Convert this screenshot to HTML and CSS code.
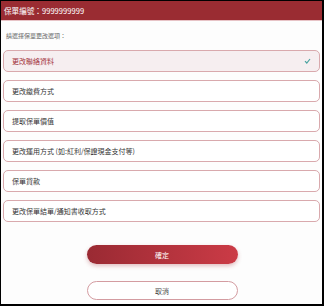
FILE: index.html
```html
<!DOCTYPE html>
<html>
  <head>
    <meta charset="UTF-8">
    <title>保單更改</title>
    <link rel="stylesheet" href="styles.css">
  </head>
  <body>
    <div class="header">保單編號：9999999999</div>
    <p class="hint">請選擇保單更改選項：</p>
    <ul class="options">
      <li class="option selected">
        <span>更改聯絡資料</span>
        <svg class="check" width="7" height="6" viewBox="0 0 7 6"><path d="M1 3.2 L2.8 5 L6 1" fill="none" stroke="#4aa3a0" stroke-width="1.2"/></svg>
      </li>
      <li class="option"><span>更改繳費方式</span></li>
      <li class="option"><span>提取保單價值</span></li>
      <li class="option"><span>更改運用方式 (如:紅利/保證現金支付等)</span></li>
      <li class="option"><span>保單貸款</span></li>
      <li class="option"><span>更改保單結單/通知書收取方式</span></li>
    </ul>
    <div class="actions">
      <button class="btn confirm">確定</button>
      <button class="btn cancel">取消</button>
    </div>
  </body>
</html>
```

FILE: styles.css
```css
html, body {
  margin: 0;
  padding: 0;
}

body {
  width: 324px;
  height: 306px;
  box-sizing: border-box;
  border-style: solid;
  border-color: #000;
  border-width: 1px 2px 2px 1px;
  background-color: #fdfdfd;
  font-family: "Noto Sans CJK TC", "Noto Sans", sans-serif;
  overflow: hidden;
}

.header {
  height: 19px;
  line-height: 19px;
  padding-left: 3px;
  background-color: #9a2c32;
  border-bottom: 1px solid #e7c3c6;
  color: #fff;
  font-size: 7.6px;
}

.hint {
  margin: 10px 0 0 5px;
  height: 10px;
  line-height: 10px;
  font-size: 6px;
  color: #666;
}

.options {
  list-style: none;
  margin: 9px 0 0;
  padding: 0 2px 1px;
}

.option {
  display: flex;
  align-items: center;
  justify-content: space-between;
  height: 20px;
  margin-bottom: 8px;
  padding: 0 8px;
  border: 1px solid #d9a9ad;
  border-radius: 5px;
  background-color: #fff;
  font-size: 7px;
  color: #333;
}

.option:last-child {
  margin-bottom: 0;
}

.option.selected {
  background-color: #f6eef0;
  color: #a3313a;
}

.check {
  display: block;
}

.actions {
  display: flex;
  flex-direction: column;
  align-items: center;
  margin-top: 22px;
  padding-left: 1px;
}

.btn {
  width: 151px;
  height: 19px;
  border-radius: 10px;
  font-family: inherit;
  font-size: 7px;
  padding: 0;
  cursor: pointer;
}

.confirm {
  border: none;
  color: #fff;
  background: linear-gradient(to right, #9a2a33, #cb3b46);
  box-shadow: 0 2px 4px rgba(160, 40, 50, 0.3);
}

.cancel {
  margin-top: 17px;
  border: 1px solid #d49ca1;
  background-color: #fff;
  color: #444;
}
```
